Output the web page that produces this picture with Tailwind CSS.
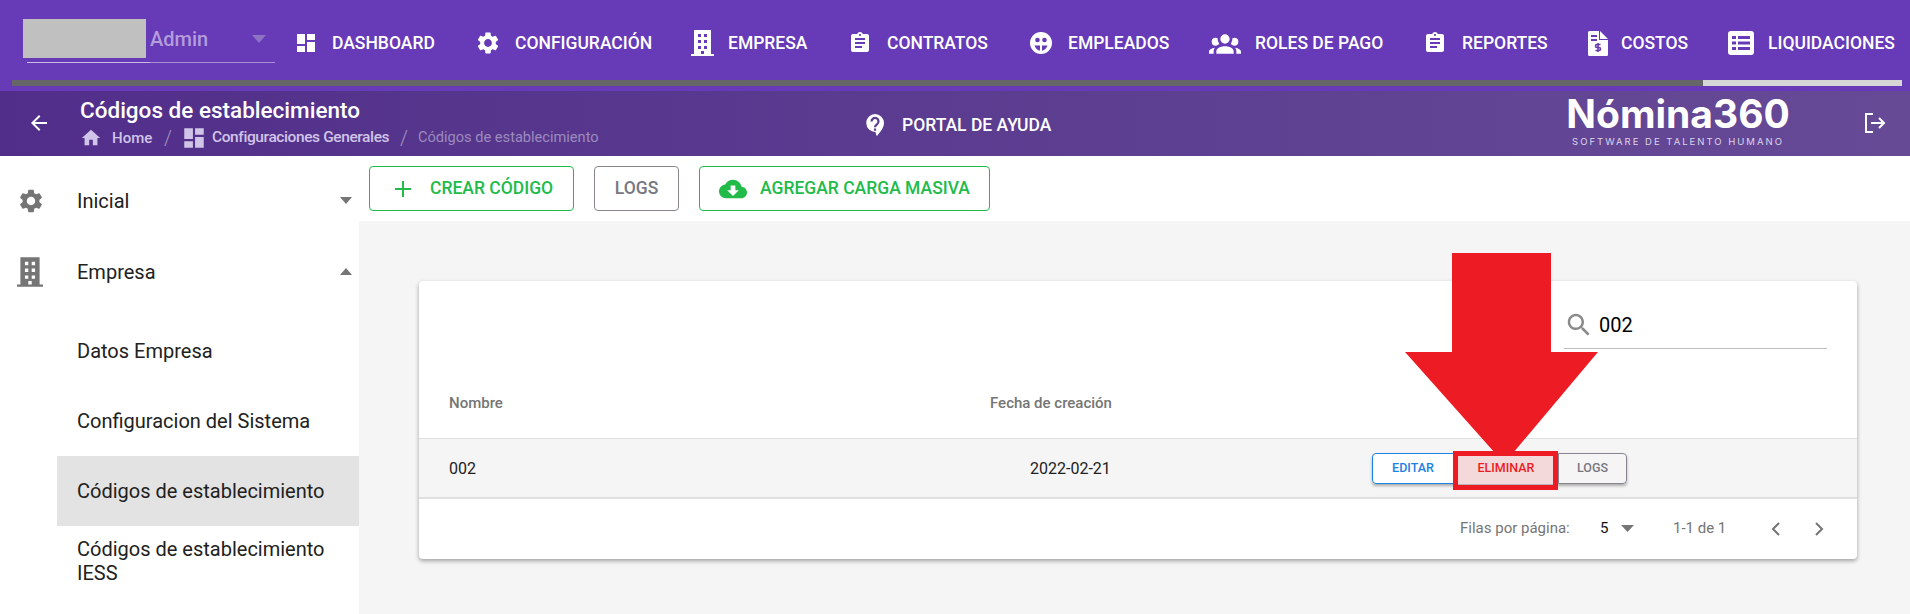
<!DOCTYPE html>
<html lang="es">
  <head>
    <meta charset="UTF-8" />
    <title>Códigos de establecimiento</title>
    <script src="https://cdn.jsdelivr.net/npm/@tailwindcss/browser@4"></script>
  </head>

  <body class="relative w-[1910px] h-[614px] overflow-hidden bg-white font-['Roboto',sans-serif]">
    <!-- Top nav -->
    <div class="relative h-[91px] bg-[#673ab7]">
      <div class="flex items-start">
        <div class="relative w-[296px] h-[80px] shrink-0">
          <div class="absolute left-[23px] top-[19px] w-[123px] h-[39px] bg-[#c0c0c0]"></div>
          <span class="absolute left-[150px] top-[27px] text-[20px] leading-6 font-medium text-[#b39ddb]">Admin</span>
          <svg class="absolute left-[252px] top-[35px] w-[14px] h-[8px] fill-[#8e72c4]" viewBox="0 0 14 8"><path d="M0 0h14L7 8z" /></svg>
          <div class="absolute left-[27px] top-[62px] w-[248px] h-px bg-[#a78fd3]"></div>
          <div class="absolute left-[27px] top-[62px] w-[123px] h-px bg-[#c9bce0]"></div>
        </div>
        <nav class="flex items-center h-[86px] text-white text-[17.5px] font-medium whitespace-nowrap">
          <a class="flex items-center w-[181px]">
            <svg class="w-[24px] h-[24px] fill-white mr-[14px] -ml-[2px]" viewBox="0 0 24 24"><path d="M3 13h8V3H3v10zm0 8h8v-6H3v6zm10 0h8V11h-8v10zm0-18v6h8V3h-8z" /></svg>
            DASHBOARD
          </a>
          <a class="flex items-center w-[214px]">
            <svg class="w-[26px] h-[26px] fill-white mr-[14px] -ml-[2px]" viewBox="0 0 24 24"><path d="M19.14 12.94c.04-.3.06-.61.06-.94 0-.32-.02-.64-.07-.94l2.03-1.58a.49.49 0 0 0 .12-.61l-1.92-3.32a.488.488 0 0 0-.59-.22l-2.39.96c-.5-.38-1.03-.7-1.62-.94l-.36-2.54a.484.484 0 0 0-.48-.41h-3.84c-.24 0-.43.17-.47.41l-.36 2.54c-.59.24-1.13.57-1.62.94l-2.39-.96c-.22-.08-.47 0-.59.22L2.74 8.87c-.12.21-.08.47.12.61l2.03 1.58c-.05.3-.09.63-.09.94s.02.64.07.94l-2.03 1.58a.49.49 0 0 0-.12.61l1.92 3.32c.12.22.37.29.59.22l2.39-.96c.5.38 1.03.7 1.62.94l.36 2.54c.05.24.24.41.48.41h3.84c.24 0 .44-.17.47-.41l.36-2.54c.59-.24 1.13-.56 1.62-.94l2.39.96c.22.08.47 0 .59-.22l1.92-3.32c.12-.22.07-.47-.12-.61l-2.01-1.58zM12 15.6c-1.98 0-3.6-1.62-3.6-3.6s1.62-3.6 3.6-3.6 3.6 1.62 3.6 3.6-1.62 3.6-3.6 3.6z" /></svg>
            CONFIGURACIÓN
          </a>
          <a class="flex items-center w-[159px]">
            <svg class="w-[23px] h-[26px] fill-white mr-[14px]" viewBox="0 0 23 26"><path fill-rule="evenodd" d="M3 0h17v24h3v2H0v-2h3zM7 4v3h3V4zm6 0v3h3V4zM7 10v3h3v-3zm6 0v3h3v-3zM7 16v3h3v-3zm6 0v3h3v-3zm-3 5v3h3v-3z" /></svg>
            EMPRESA
          </a>
          <a class="flex items-center w-[180px]">
            <svg class="w-[24px] h-[24px] fill-white mr-[15px] -ml-[2px]" viewBox="0 0 24 24"><path d="M19 3h-4.18C14.4 1.84 13.3 1 12 1c-1.3 0-2.4.84-2.82 2H5c-1.1 0-2 .9-2 2v14c0 1.1.9 2 2 2h14c1.1 0 2-.9 2-2V5c0-1.1-.9-2-2-2zm-7 0c.55 0 1 .45 1 1s-.45 1-1 1-1-.45-1-1 .45-1 1-1zm2 14H7v-2h7v2zm3-4H7v-2h10v2zm0-4H7V7h10v2z" /></svg>
            CONTRATOS
          </a>
          <a class="flex items-center w-[179px]">
            <svg class="w-[22px] h-[22px] mr-[16px]" viewBox="0 0 22 22"><circle cx="11" cy="11" r="11" fill="#fff" /><circle cx="7.500" cy="8" r="2.300" fill="#673ab7" /><circle cx="14.500" cy="8" r="2.300" fill="#673ab7" /><path d="M4.500 13.500h5.500v5.300c-2.600-.500-4.700-2.700-5.500-5.300zM12 13.500h5.500c-.800 2.600-2.900 4.800-5.500 5.300z" fill="#673ab7" /></svg>
            EMPLEADOS
          </a>
          <a class="flex items-center w-[216px]">
            <svg class="w-[32px] h-[32px] fill-white mr-[14px]" viewBox="0 0 24 24"><path d="M12,5.5A3.5,3.5 0 0,1 15.5,9A3.5,3.5 0 0,1 12,12.5A3.5,3.5 0 0,1 8.5,9A3.5,3.5 0 0,1 12,5.5M5,8C5.56,8 6.08,8.15 6.53,8.42C6.38,9.85 6.8,11.27 7.66,12.38C7.16,13.34 6.16,14 5,14A3,3 0 0,1 2,11A3,3 0 0,1 5,8M19,8A3,3 0 0,1 22,11A3,3 0 0,1 19,14C17.84,14 16.84,13.34 16.34,12.38C17.2,11.27 17.62,9.85 17.47,8.42C17.92,8.15 18.44,8 19,8M5.5,18.25C5.5,16.18 8.41,14.5 12,14.5C15.59,14.5 18.5,16.18 18.5,18.25V20H5.5V18.25M0,20V18.5C0,17.11 1.89,15.94 4.45,15.6C3.86,16.28 3.5,17.22 3.5,18.25V20H0M24,20H20.5V18.25C20.5,17.22 20.14,16.28 19.55,15.6C22.11,15.94 24,17.11 24,18.5V20Z" /></svg>
            ROLES DE PAGO
          </a>
          <a class="flex items-center w-[163px]">
            <svg class="w-[24px] h-[24px] fill-white mr-[15px] -ml-[2px]" viewBox="0 0 24 24"><path d="M19 3h-4.18C14.4 1.84 13.3 1 12 1c-1.3 0-2.4.84-2.82 2H5c-1.1 0-2 .9-2 2v14c0 1.1.9 2 2 2h14c1.1 0 2-.9 2-2V5c0-1.1-.9-2-2-2zm-7 0c.55 0 1 .45 1 1s-.45 1-1 1-1-.45-1-1 .45-1 1-1zm2 14H7v-2h7v2zm3-4H7v-2h10v2zm0-4H7V7h10v2z" /></svg>
            REPORTES
          </a>
          <a class="flex items-center w-[140px]">
            <svg class="w-[20px] h-[25px] mr-[13px]" viewBox="0 0 20 25"><path fill="#fff" d="M0 1.500A1.500 1.500 0 0 1 1.500 0H12l8 8v15.500a1.500 1.500 0 0 1-1.500 1.500h-17A1.500 1.500 0 0 1 0 23.500z" /><path fill="#673ab7" d="M12 0v8h8v1h-9V0zM3 4h6v2H3zM3 8h6v2H3z" /><path fill="none" stroke="#673ab7" stroke-width="1.600" d="M12.500 13.500h-3.500a1.500 1.500 0 0 0 0 3h2a1.500 1.500 0 0 1 0 3h-3.500M10 12v9" /></svg>
            COSTOS
          </a>
          <a class="flex items-center">
            <svg class="w-[26px] h-[24px] mr-[14px]" viewBox="0 0 26 24"><rect width="26" height="24" rx="3" fill="#fff" /><path fill="#673ab7" d="M4 5h4v3H4zM10 5h12v3H10zM4 10.500h4v3H4zM10 10.500h12v3H10zM4 16h4v3H4zM10 16h12v3H10z" /></svg>
            LIQUIDACIONES
          </a>
        </nav>
      </div>
      <!-- Tab indicator -->
      <div class="absolute left-[12px] top-[80px] w-[1691px] h-[6px] bg-[#666666]"></div>
      <div class="absolute left-[1703px] top-[80px] w-[199px] h-[6px] bg-[#d6d6d6]"></div>
    </div>

    <!-- Breadcrumb bar -->
    <div class="relative h-[65px] bg-linear-to-r from-[#512e8a] to-[#664a96] text-white">
      <svg class="absolute left-[27px] top-[20px] w-[24px] h-[24px] fill-white" viewBox="0 0 24 24"><path d="M20 11H7.830l5.590-5.590L12 4l-8 8 8 8 1.410-1.410L7.830 13H20v-2z" /></svg>
      <div class="absolute left-[80px] top-[5px] whitespace-nowrap">
        <div class="text-[22.500px] leading-[28px] font-medium">Códigos de establecimiento</div>
        <div class="flex items-center h-[28px] text-[15px] font-medium text-[#d1c4e9]">
          <svg class="w-[22px] h-[22px] fill-[#d1c4e9] mr-[10px]" viewBox="0 0 24 24"><path d="M10 20v-6h4v6h5v-8h3L12 3 2 12h3v8z" /></svg>
          <span class="w-[50px]">Home</span>
          <span class="w-[19px] pl-[2px] text-[20px] font-light text-[#a592c4]">/</span>
          <svg class="w-[26px] h-[26px] fill-[#d1c4e9] mr-[5px]" viewBox="0 0 24 24"><path d="M3 13h8V3H3v10zm0 8h8v-6H3v6zm10 0h8V11h-8v10zm0-18v6h8V3h-8z" /></svg>
          <span class="w-[177px] text-[15.500px] tracking-[-0.4px]">Configuraciones Generales</span>
          <span class="w-[29px] pl-[11px] text-[20px] font-light text-[#a592c4]">/</span>
          <span class="text-[14.600px] font-normal text-[#9c8bbd]">Códigos de establecimiento</span>
        </div>
      </div>
      <div class="absolute left-[866px] top-[21px] flex items-center text-[17.500px] font-medium">
        <svg class="w-[18px] h-[22px] mr-[18px]" viewBox="0 0 18 22"><path fill="#fff" d="M9 0a9 9 0 0 1 9 9c0 5-4 9-7 13-1-1-1-2-1.500-4A9 9 0 0 1 9 0z" /><path fill="none" stroke="#5a3b8e" stroke-width="2.200" d="M5.500 7.500a3.500 3.500 0 1 1 5.500 2.800c-1.300.9-2 1.500-2 3" /><rect x="7.900" y="14.500" width="2.200" height="2.200" fill="#5a3b8e" /></svg>
        PORTAL DE AYUDA
      </div>
      <div class="absolute left-[1547px] top-[1px] w-[262px] text-center">
        <div class="text-[39px] leading-[44px] font-bold font-['Inter',sans-serif] whitespace-nowrap">Nómina360</div>
        <div class="text-[9.500px] leading-[12px] tracking-[2px] text-[#ddd5ea] font-['Inter',sans-serif] whitespace-nowrap">SOFTWARE DE TALENTO HUMANO</div>
      </div>
      <svg class="absolute left-[1865px] top-[22px] w-[22px] h-[20px]" viewBox="0 0 22 20" fill="none" stroke="#fff" stroke-width="2"><path d="M8 1H1v18h7M6 10h13M14 5l5 5-5 5" /></svg>
    </div>

    <div class="flex h-[458px]">
      <!-- Sidebar -->
      <aside class="relative w-[359px] shrink-0 text-[20px] text-[#212121]">
        <div class="flex items-center h-[45px] mt-[22px] pl-[19px]">
          <svg class="w-[28px] h-[28px] fill-[#757575] -ml-[2px] mr-[32px]" viewBox="0 0 24 24"><path d="M19.14 12.94c.04-.3.06-.61.06-.94 0-.32-.02-.64-.07-.94l2.03-1.58a.49.49 0 0 0 .12-.61l-1.92-3.32a.488.488 0 0 0-.59-.22l-2.39.96c-.5-.38-1.03-.7-1.62-.94l-.36-2.54a.484.484 0 0 0-.48-.41h-3.84c-.24 0-.43.17-.47.41l-.36 2.54c-.59.24-1.13.57-1.62.94l-2.39-.96c-.22-.08-.47 0-.59.22L2.74 8.87c-.12.21-.08.47.12.61l2.03 1.58c-.05.3-.09.63-.09.94s.02.64.07.94l-2.03 1.58a.49.49 0 0 0-.12.61l1.92 3.32c.12.22.37.29.59.22l2.39-.96c.5.38 1.03.7 1.62.94l.36 2.54c.05.24.24.41.48.41h3.84c.24 0 .44-.17.47-.41l.36-2.54c.59-.24 1.13-.56 1.62-.94l2.39.96c.22.08.47 0 .59-.22l1.92-3.32c.12-.22.07-.47-.12-.61l-2.01-1.58zM12 15.6c-1.98 0-3.6-1.62-3.6-3.6s1.62-3.6 3.6-3.6 3.6 1.62 3.6 3.6-1.62 3.6-3.6 3.6z" /></svg>
          <span class="flex-1">Inicial</span>
          <svg class="w-[12px] h-[7px] fill-[#757575] mr-[7px]" viewBox="0 0 12 7"><path d="M0 0h12L6 7z" /></svg>
        </div>
        <div class="flex items-center h-[45px] mt-[26px] pl-[17px]">
          <svg class="w-[26px] h-[30px] fill-[#757575] mr-[34px]" viewBox="0 0 23 26"><path fill-rule="evenodd" d="M3 0h17v24h3v2H0v-2h3zM7 4v3h3V4zm6 0v3h3V4zM7 10v3h3v-3zm6 0v3h3v-3zM7 16v3h3v-3zm6 0v3h3v-3zm-3 5v3h3v-3z" /></svg>
          <span class="flex-1">Empresa</span>
          <svg class="w-[12px] h-[7px] fill-[#757575] mr-[7px]" viewBox="0 0 12 7"><path d="M0 7h12L6 0z" /></svg>
        </div>
        <div class="ml-[57px] mt-[22px]">
          <div class="flex items-center h-[70px] pl-[20px]">Datos Empresa</div>
          <div class="flex items-center h-[70px] pl-[20px]">Configuracion del Sistema</div>
          <div class="flex items-center h-[70px] pl-[20px] bg-[#e3e3e3]">Códigos de establecimiento</div>
          <div class="pl-[20px] pt-[11px] leading-[24px]">Códigos de establecimiento<br />IESS</div>
        </div>
      </aside>

      <main class="flex-1 flex flex-col">
        <!-- Toolbar -->
        <div class="flex items-center gap-[20px] h-[65px] pl-[10px] text-[17.500px] font-medium">
          <button class="flex items-center h-[45px] w-[205px] pl-[25px] border border-[#22bb4a] rounded-[4px] text-[#22bb4a]">
            <svg class="w-[16px] h-[16px] mr-[19px]" viewBox="0 0 16 16" fill="none" stroke="#22bb4a" stroke-width="2"><path d="M8 0v16M0 8h16" /></svg>
            CREAR CÓDIGO
          </button>
          <button class="h-[45px] w-[85px] border border-[#8a8490] rounded-[4px] text-[#777782]">LOGS</button>
          <button class="flex items-center h-[45px] w-[291px] pl-[19px] border border-[#22bb4a] rounded-[4px] text-[#22bb4a]">
            <svg class="w-[28px] h-[28px] fill-[#22bb4a] mr-[13px]" viewBox="0 0 24 24"><path d="M19.350 10.040C18.670 6.590 15.640 4 12 4 9.110 4 6.600 5.640 5.350 8.040 2.340 8.360 0 10.910 0 14c0 3.310 2.690 6 6 6h13c2.760 0 5-2.240 5-5 0-2.640-2.050-4.780-4.650-4.960zM17 13l-5 5-5-5h3V9h4v4h3z" /></svg>
            AGREGAR CARGA MASIVA
          </button>
        </div>

        <!-- Content -->
        <div class="flex-1 bg-[#f5f5f5] pt-[60px] pl-[60px]">
          <div class="w-[1438px] h-[278px] bg-white rounded-[4px] shadow-[0_2px_4px_rgba(0,0,0,0.35)] overflow-hidden">
            <div class="relative h-[158px] border-b border-[#e0e0e0] text-[15px] font-medium text-[#757575]">
              <span class="absolute left-[30px] top-[112px] leading-5">Nombre</span>
              <span class="absolute left-[571px] top-[112px] leading-5">Fecha de creación</span>
              <div class="absolute left-[1145px] top-[30px] w-[263px] h-[38px] pb-[10px] flex items-center border-b border-[#bdbdbd]">
                <svg class="w-[30px] h-[30px] fill-[#8a8a8a] mr-[5px]" viewBox="0 0 24 24"><path d="M15.500 14h-.790l-.280-.270C15.410 12.590 16 11.110 16 9.500 16 5.910 13.090 3 9.500 3S3 5.910 3 9.500 5.910 16 9.500 16c1.610 0 3.090-.590 4.230-1.570l.270.280v.790l5 4.990L20.490 19l-4.990-5zm-6 0C7.010 14 5 11.990 5 9.500S7.010 5 9.500 5 14 7.010 14 9.500 11.990 14 9.500 14z" /></svg>
                <span class="text-[20px] font-normal text-black">002</span>
              </div>
            </div>
            <div class="relative flex items-center h-[60px] pt-[1px] bg-[#f5f5f5] border-b-2 border-[#e0e0e0] text-[16px] text-[#212121]">
              <span class="absolute left-[30px]">002</span>
              <span class="absolute left-[611px]">2022-02-21</span>
              <div class="absolute left-[953px] top-[14px] flex h-[31px] rounded-[4px] text-[12.500px] font-medium shadow-[0_2px_3px_rgba(0,0,0,0.3)]">
                <button class="w-[82px] bg-white border border-[#1a82e2] rounded-l-[4px] text-[#1a82e2]">EDITAR</button>
                <button class="w-[104px] bg-[#f3d9da] text-[#ed1c24]">ELIMINAR</button>
                <button class="w-[69px] bg-[#f5f5f5] border border-[#8a8490] rounded-r-[4px] text-[#777782]">LOGS</button>
              </div>
            </div>
            <div class="flex items-center h-[59px] text-[15px] text-[#757575] whitespace-nowrap">
              <span class="ml-[1041px] w-[140px]">Filas por página:</span>
              <span class="w-[21px] text-[#111]">5</span>
              <svg class="w-[13px] h-[7px] fill-[#757575] mr-[39px]" viewBox="0 0 13 7"><path d="M0 0h13L6.500 7z" /></svg>
              <span class="w-[52px]">1-1 de 1</span>
              <svg class="w-[11px] h-[16px] ml-[45px]" viewBox="0 0 11 16" fill="none" stroke="#757575" stroke-width="2"><path d="M9 2L3 8l6 6" /></svg>
              <svg class="w-[11px] h-[16px] ml-[33px]" viewBox="0 0 11 16" fill="none" stroke="#757575" stroke-width="2"><path d="M2 2l6 6-6 6" /></svg>
            </div>
          </div>
        </div>
      </main>
    </div>

    <!-- Red annotation over the table -->
    <div class="absolute left-[1453px] top-[451px] w-[105px] h-[39px] border-[5px] border-[#ed1c24]"></div>
    <svg class="absolute left-[1405px] top-[253px] w-[193px] h-[200px] fill-[#ed1c24]" viewBox="0 0 193 200"><path d="M47 0h99v99h47l-85 101H90L0 99h47z" /></svg>
  </body>
</html>
